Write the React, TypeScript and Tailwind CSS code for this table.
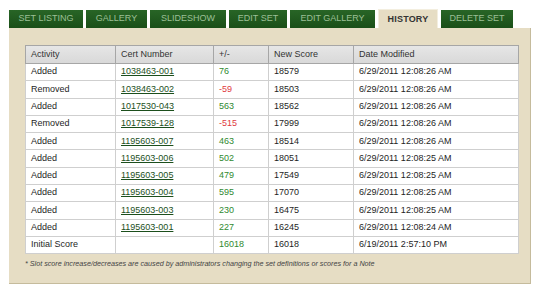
const tabs = [
  { label: "SET LISTING", w: "w-[74px]" },
  { label: "GALLERY", w: "w-[61px]" },
  { label: "SLIDESHOW", w: "w-[76px]" },
  { label: "EDIT SET", w: "w-[58px]" },
  { label: "EDIT GALLERY", w: "w-[85px]" },
  { label: "HISTORY", w: "w-[60px]", active: true },
  { label: "DELETE SET", w: "w-[72px]" },
];

const rows = [
  ["Added", "1038463-001", "76", "18579", "6/29/2011 12:08:26 AM"],
  ["Removed", "1038463-002", "-59", "18503", "6/29/2011 12:08:26 AM"],
  ["Added", "1017530-043", "563", "18562", "6/29/2011 12:08:26 AM"],
  ["Removed", "1017539-128", "-515", "17999", "6/29/2011 12:08:26 AM"],
  ["Added", "1195603-007", "463", "18514", "6/29/2011 12:08:26 AM"],
  ["Added", "1195603-006", "502", "18051", "6/29/2011 12:08:25 AM"],
  ["Added", "1195603-005", "479", "17549", "6/29/2011 12:08:25 AM"],
  ["Added", "1195603-004", "595", "17070", "6/29/2011 12:08:25 AM"],
  ["Added", "1195603-003", "230", "16475", "6/29/2011 12:08:25 AM"],
  ["Added", "1195603-001", "227", "16245", "6/29/2011 12:08:24 AM"],
  ["Initial Score", "", "16018", "16018", "6/19/2011 2:57:10 PM"],
];

function Tabs() {
  return (
    <div className="flex items-end gap-[3px] h-[19px]">
      {tabs.map((t) =>
        t.active ? (
          <div
            key={t.label}
            className={`${t.w} h-[19px] bg-[#e6ddc4] border-t border-l border-r border-[#f3eedf] text-[#333] text-[9px] font-bold tracking-[0.2px] flex items-center justify-center pt-[2px]`}
          >
            {t.label}
          </div>
        ) : (
          <div
            key={t.label}
            className={`${t.w} h-[18px] bg-gradient-to-b from-[#286526] to-[#1a4f18] text-[#9cc096] text-[9px] flex items-center justify-center pb-[1px]`}
          >
            {t.label}
          </div>
        )
      )}
    </div>
  );
}

function HistoryTable() {
  return (
    <table className="w-[493px] border-collapse table-fixed border border-[#a6a6a6] bg-white text-[9px] text-[#1e1e1e]">
      <colgroup>
        <col className="w-[90px]" />
        <col className="w-[98px]" />
        <col className="w-[55px]" />
        <col className="w-[85px]" />
        <col className="w-[165px]" />
      </colgroup>
      <thead>
        <tr className="h-[18px] bg-gradient-to-b from-[#e6e6e6] to-[#d8d8d8] text-[#333]">
          {["Activity", "Cert Number", "+/-", "New Score", "Date Modified"].map((h) => (
            <th key={h} className="font-normal text-left pl-[5px] border border-[#a6a6a6]">
              {h}
            </th>
          ))}
        </tr>
      </thead>
      <tbody>
        {rows.map((r, i) => (
          <tr key={i} className="h-[17.3px]">
            <td className="pl-[5px] border border-[#cfcfcf]">{r[0]}</td>
            <td className="pl-[5px] border border-[#cfcfcf]">
              {r[1] && <span className="underline text-[#1c4f1c]">{r[1]}</span>}
            </td>
            <td
              className={`pl-[5px] border border-[#cfcfcf] ${
                r[2].startsWith("-") ? "text-[#e0393e]" : "text-[#2f8a2f]"
              }`}
            >
              {r[2]}
            </td>
            <td className="pl-[5px] border border-[#cfcfcf]">{r[3]}</td>
            <td className="pl-[5px] border border-[#cfcfcf]">{r[4]}</td>
          </tr>
        ))}
      </tbody>
    </table>
  );
}

export default function App() {
  return (
    <div className="w-[541px] h-[295px] bg-white pt-[9px] pl-[9px] font-['Liberation_Sans',Arial,sans-serif]">
      <Tabs />
      <div className="w-[522px] h-[256px] bg-[#e6ddc4] border-r border-b border-[#c5bb9c] pt-[17px] pl-[16px]">
        <HistoryTable />
        <p className="mt-[5px] text-[7.2px] italic text-[#444]">
          * Slot score increase/decreases are caused by administrators changing the set definitions or scores for a Note
        </p>
      </div>
    </div>
  );
}
